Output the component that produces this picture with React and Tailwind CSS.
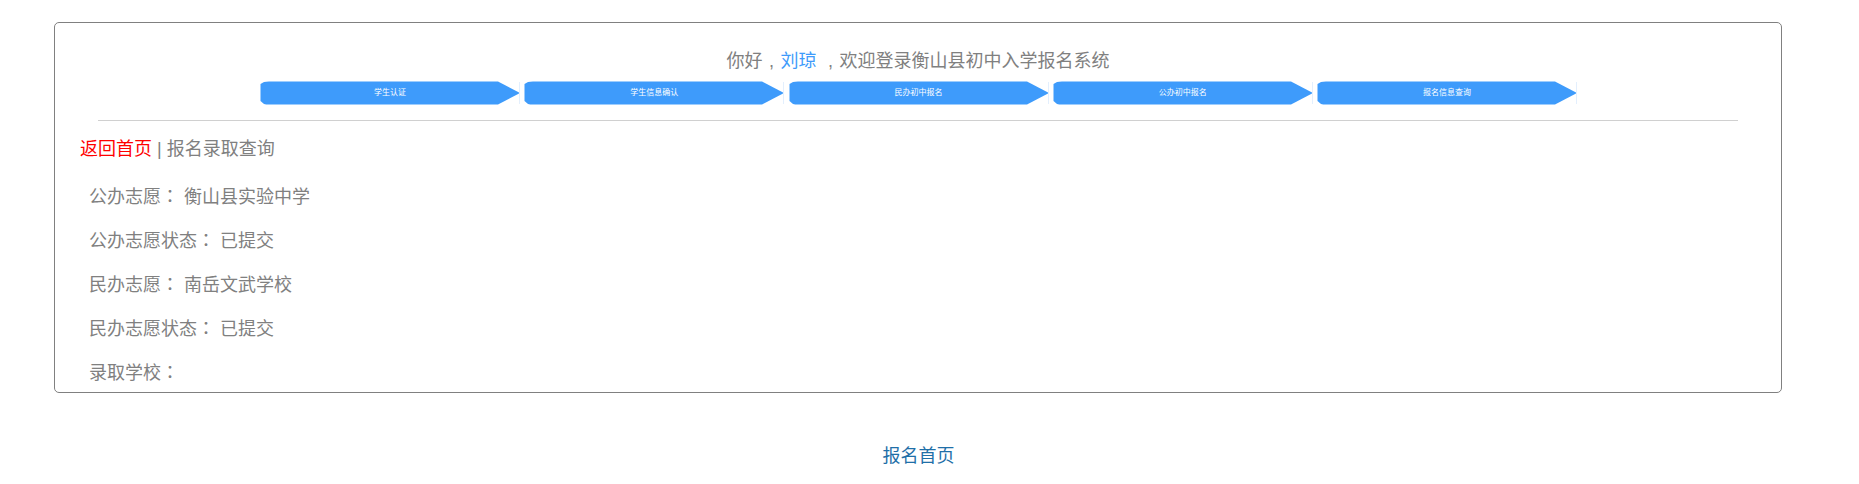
const font = { fontFamily: '"Liberation Sans", "Noto Sans CJK SC", sans-serif' };
const tcFont = { fontFamily: '"Noto Sans CJK TC", sans-serif' };

const steps = ['学生认证', '学生信息确认', '民办初中报名', '公办初中报名', '报名信息查询'];

const rows = [
  ['公办志愿', '衡山县实验中学'],
  ['公办志愿状态', '已提交'],
  ['民办志愿', '南岳文武学校'],
  ['民办志愿状态', '已提交'],
  ['录取学校', ''],
];

// the reference's full-width colon sits centred in its cell, as the TC cut does
function Colon() {
  return <span className="leading-[0]" style={tcFont}>：</span>;
}

function Comma() {
  return <span className="inline-block w-[18px] text-center">,</span>;
}

function Step({ label }) {
  return (
    <div className="relative flex h-[24px] w-[260px] items-center justify-center">
      <svg className="absolute inset-0" width="260" height="24" viewBox="0 0 260 24">
        <path
          d="M0.5 3 L4 1 Q6 0.5 9 0.5 L238 0.5 L260 12 L238 23.5 L9 23.5 Q6 23.5 4 23 L0.5 20 Z"
          fill="#3e9bfb"
        />
        <line x1="259.5" y1="1" x2="259.5" y2="23" stroke="#e3effd" strokeWidth="1" />
      </svg>
      <span className="relative text-[8px] leading-none text-white">{label}</span>
    </div>
  );
}

export default function App() {
  return (
    <div className="h-[484px] overflow-hidden bg-white pt-[22px]" style={font}>
      <div className="ml-[54px] h-[371px] w-[1728px] overflow-hidden rounded-[5px] border border-[#808080] pl-[25px] pr-[44px]">
        <div className="-ml-[25px] -mr-[44px] pt-[26px] text-center text-[18px] leading-[24px] text-[#808080]">
          你好<Comma /><span className="text-[#3e9bfb]">刘琼</span> <Comma />欢迎登录衡山县初中入学报名系统
        </div>
        <div className="mt-[8px] flex gap-[4.25px] pl-[180px]">
          {steps.map((s) => (
            <Step key={s} label={s} />
          ))}
        </div>
        <div className="ml-[18px] mt-[15px] h-px w-[1640px] bg-[#d0d0d0]" />
        <div className="mt-[15px] text-[18px] leading-[26px] text-[#808080]">
          <span className="text-[#ff0000]">返回首页</span> | 报名录取查询
        </div>
        <div className="mt-[22px] flex flex-col gap-[18px] pl-[9px] text-[18px] leading-[26px] text-[#808080]">
          {rows.map(([k, v]) => (
            <div key={k}>
              {k}<Colon /> {v}
            </div>
          ))}
        </div>
      </div>
      <div className="ml-[54px] mt-[50px] w-[1729px] text-center text-[18px] leading-[26px] text-[#1f6fa8]">报名首页</div>
    </div>
  );
}
